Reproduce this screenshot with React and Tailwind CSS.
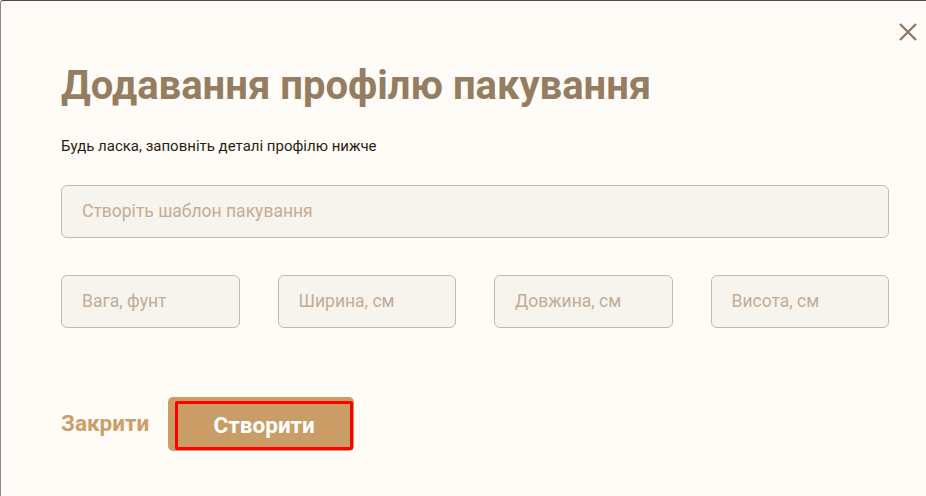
import React from "react";

const fields = ["Вага, фунт", "Ширина, см", "Довжина, см", "Висота, см"];

export default function App() {
  return (
    <div
      className="w-[926px] h-[496px] overflow-hidden bg-[#fffcf8] border-t border-t-[#4a4a4a] border-l border-l-[#8a8a8a] rounded-tl-[3px] relative"
      style={{ fontFamily: "Roboto, 'Liberation Sans', sans-serif" }}
    >
      <button className="absolute right-[8px] top-[21px] text-[#8b7660]">
        <svg width="20" height="20" viewBox="0 0 20 20">
          <path d="M2 2 L18 18 M18 2 L2 18" stroke="currentColor" strokeWidth="2.2" />
        </svg>
      </button>

      <div className="pl-[60px] pr-[37px] pt-[61px]">
        <h1 className="text-[40px] leading-[48px] font-bold text-[#957d61]">
          Додавання профілю пакування
        </h1>
        <p className="mt-[26px] text-[15px] leading-[20px] text-[#2a1c10]">
          Будь ласка, заповніть деталі профілю нижче
        </p>

        <div className="mt-[29px] h-[53px] rounded-[6px] border border-[#c9b8a3] bg-[#f7f4ee] flex items-center px-[20px] text-[17.5px] text-[#c3ac95]">
          Створіть шаблон пакування
        </div>

        <div className="mt-[37px] grid grid-cols-4 gap-[38px]">
          {fields.map((f) => (
            <div
              key={f}
              className="h-[53px] rounded-[6px] border border-[#c9b8a3] bg-[#f7f4ee] flex items-center px-[20px] text-[17.5px] text-[#c3ac95]"
            >
              {f}
            </div>
          ))}
        </div>

        <div className="mt-[69px] flex items-center">
          <span className="text-[22.5px] font-bold text-[#cc9f67] mr-[19px]">
            Закрити
          </span>
          <div className="w-[186px] h-[54px] rounded-[5px] bg-[#cb9d66] pl-[7px] pt-[4px] pr-[1px] pb-[1px]">
            <div className="h-full border-[3px] border-[#ff0000] rounded-[2px] flex items-center justify-center text-[22.5px] font-bold text-white">
              Створити
            </div>
          </div>
        </div>
      </div>
    </div>
  );
}
